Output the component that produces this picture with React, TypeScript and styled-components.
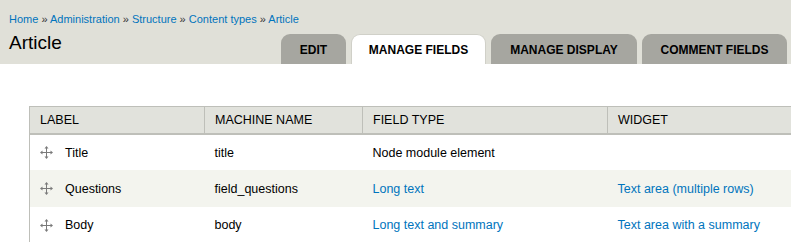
import styled, { createGlobalStyle } from 'styled-components';

const GlobalStyle = createGlobalStyle`
	body {
		margin: 0;
		background: #fff;
		font-family: 'Liberation Sans', Arial, sans-serif;
		color: #000;
		overflow: hidden;
	}
`;

const Header = styled.div`
	background: #e0e0d8;
	height: 64px;
	display: flex;
	flex-direction: column;
	padding: 12px 4px 0 9px;
	box-sizing: border-box;
`;

const Breadcrumb = styled.div`
	font-size: 11px;
	line-height: 14px;
	color: #333;
	white-space: nowrap;
`;

const Crumb = styled.a`
	color: #0074bd;
	text-decoration: none;
`;

const TitleRow = styled.div`
	flex: 1;
	min-height: 0;
	display: flex;
	justify-content: space-between;
	align-items: flex-end;
`;

const PageTitle = styled.h1`
	margin: 5px 0 0;
	align-self: flex-start;
	font-size: 19px;
	font-weight: normal;
	line-height: 24px;
`;

const Tabs = styled.div`
	display: flex;
	gap: 5px;
`;

const Tab = styled.div<{ $active?: boolean; $width: number }>`
	height: 30px;
	box-sizing: border-box;
	display: flex;
	align-items: center;
	justify-content: center;
	width: ${(p) => p.$width}px;
	border-radius: 9px 9px 0 0;
	background: ${(p) => (p.$active ? '#fff' : '#a6a6a0')};
	border: 1px solid ${(p) => (p.$active ? '#d0d0c8' : 'transparent')};
	border-bottom: none;
	font-size: 12px;
	font-weight: bold;
	color: #000;
`;

const Content = styled.div`
	padding: 42px 0 0 29px;
`;

const Table = styled.table`
	width: 800px;
	border-collapse: collapse;
	font-size: 12.5px;
	border: 1px solid #bebfb9;
`;

const Th = styled.th<{ $width?: number }>`
	text-align: left;
	font-weight: normal;
	background: #e1e2dc;
	height: 27px;
	padding: 1px 10px 0;
	border: 1px solid #bebfb9;
	border-width: 0 1px 2px 1px;
	width: ${(p) => (p.$width ? `${p.$width}px` : 'auto')};
	box-sizing: border-box;
`;

const Row = styled.tr<{ $alt?: boolean }>`
	background: ${(p) => (p.$alt ? '#f3f4ee' : '#fff')};
	height: 36.5px;
`;

const Td = styled.td`
	padding: 1px 10px 0;
	vertical-align: middle;
`;

const LabelCell = styled.div`
	display: flex;
	align-items: center;
	gap: 12px;
`;

const Link = styled.a`
	color: #0074bd;
	text-decoration: none;
`;

const DragIcon = () => (
	<svg width="13" height="13" viewBox="0 0 13 13">
		<g fill="#7a7a7a">
			<rect x="6" y="2" width="1" height="9" />
			<rect x="2" y="6" width="9" height="1" />
			<polygon points="6.5,0 4.5,2.5 8.5,2.5" />
			<polygon points="6.5,13 4.5,10.5 8.5,10.5" />
			<polygon points="0,6.5 2.5,4.5 2.5,8.5" />
			<polygon points="13,6.5 10.5,4.5 10.5,8.5" />
		</g>
	</svg>
);

type Field = {
	label: string;
	machine: string;
	type: string;
	typeLink: boolean;
	widget?: string;
};

const fields: Field[] = [
	{ label: 'Title', machine: 'title', type: 'Node module element', typeLink: false },
	{
		label: 'Questions',
		machine: 'field_questions',
		type: 'Long text',
		typeLink: true,
		widget: 'Text area (multiple rows)',
	},
	{
		label: 'Body',
		machine: 'body',
		type: 'Long text and summary',
		typeLink: true,
		widget: 'Text area with a summary',
	},
];

const tabs = [
	{ label: 'EDIT', width: 65 },
	{ label: 'MANAGE FIELDS', width: 135, active: true },
	{ label: 'MANAGE DISPLAY', width: 146 },
	{ label: 'COMMENT FIELDS', width: 145 },
];

export default function App() {
	return (
		<>
			<GlobalStyle />
			<Header>
				<Breadcrumb>
					<Crumb href="#">Home</Crumb> » <Crumb href="#">Administration</Crumb> »{' '}
					<Crumb href="#">Structure</Crumb> » <Crumb href="#">Content types</Crumb> »{' '}
					<Crumb href="#">Article</Crumb>
				</Breadcrumb>
				<TitleRow>
					<PageTitle>Article</PageTitle>
					<Tabs>
						{tabs.map((t) => (
							<Tab key={t.label} $active={t.active} $width={t.width}>
								{t.label}
							</Tab>
						))}
					</Tabs>
				</TitleRow>
			</Header>
			<Content>
				<Table>
					<thead>
						<tr>
							<Th $width={175}>LABEL</Th>
							<Th $width={158}>MACHINE NAME</Th>
							<Th $width={245}>FIELD TYPE</Th>
							<Th>WIDGET</Th>
						</tr>
					</thead>
					<tbody>
						{fields.map((f, i) => (
							<Row key={f.machine} $alt={i % 2 === 1}>
								<Td>
									<LabelCell>
										<DragIcon />
										{f.label}
									</LabelCell>
								</Td>
								<Td>{f.machine}</Td>
								<Td>{f.typeLink ? <Link href="#">{f.type}</Link> : f.type}</Td>
								<Td>{f.widget && <Link href="#">{f.widget}</Link>}</Td>
							</Row>
						))}
					</tbody>
				</Table>
			</Content>
		</>
	);
}
